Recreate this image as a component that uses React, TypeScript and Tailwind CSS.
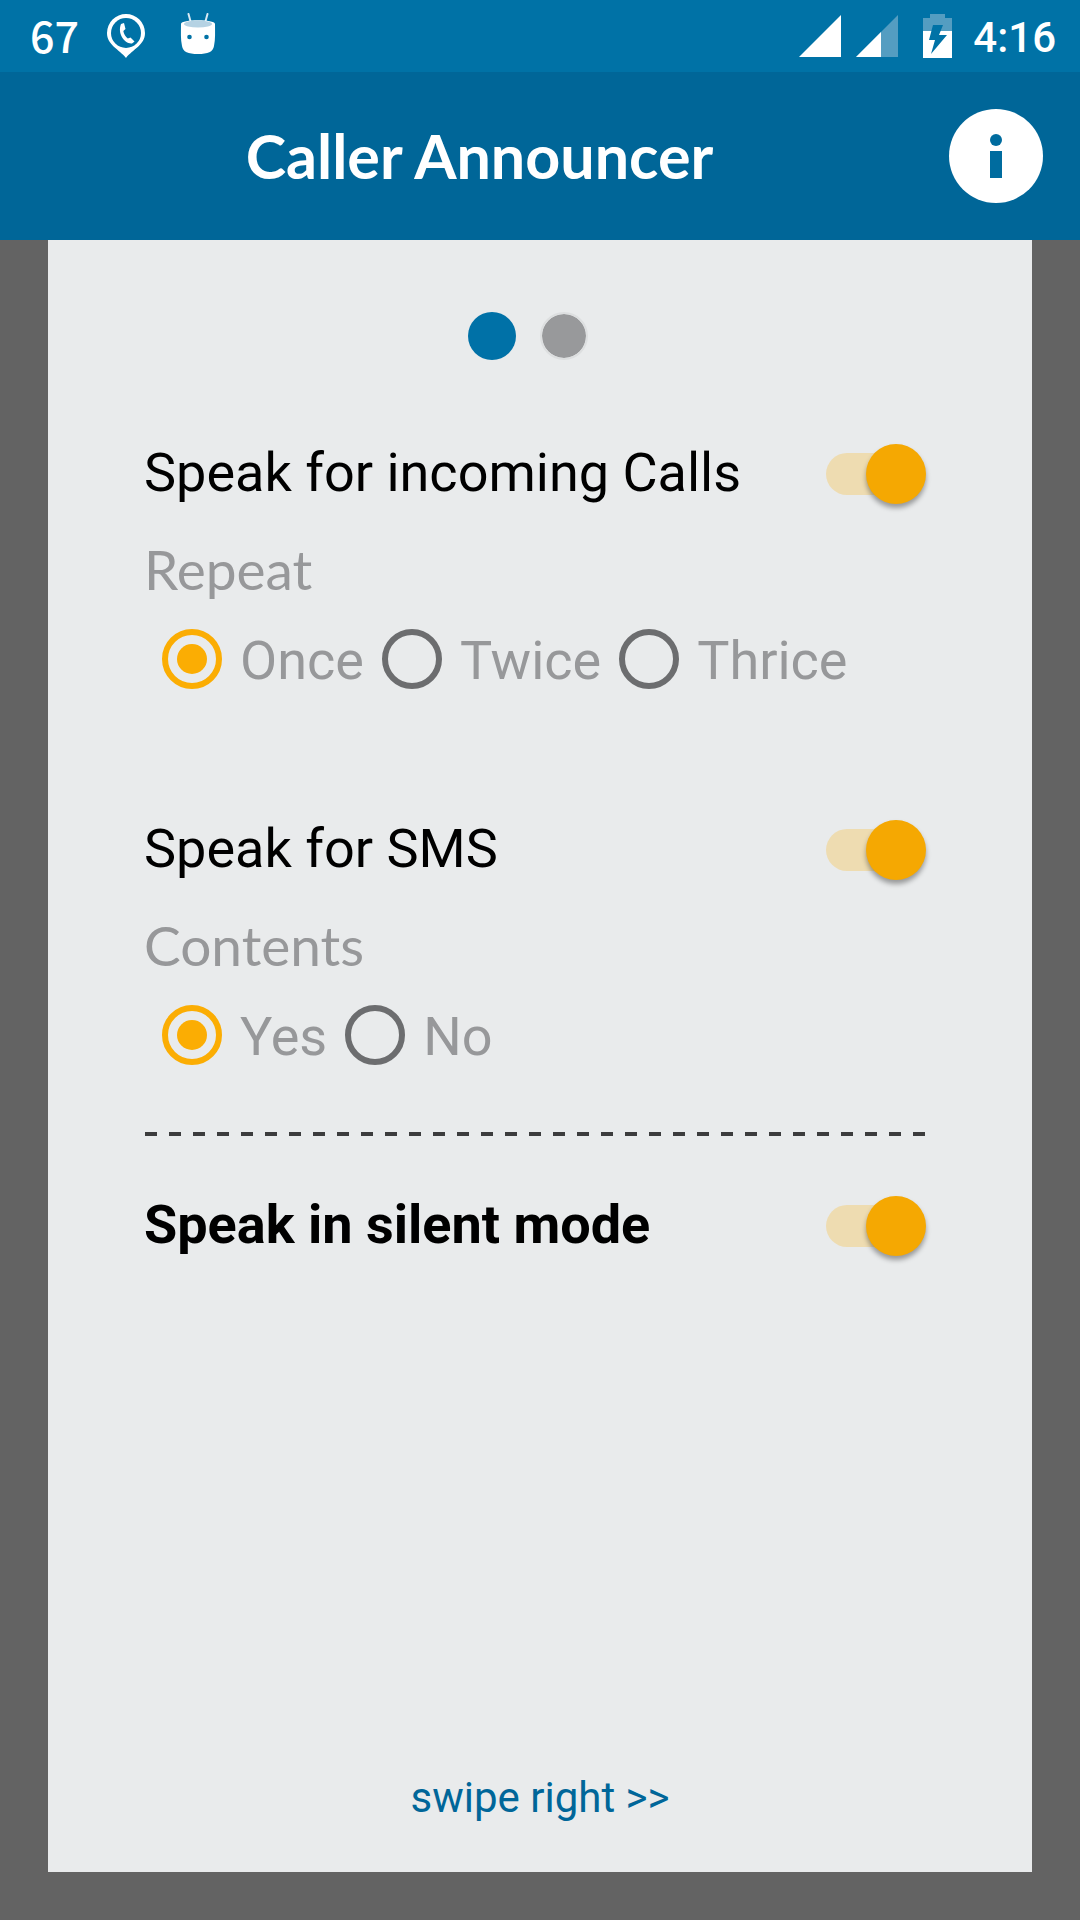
import React, { useState } from 'react';

interface SwitchRowProps {
  id: string;
  label: string;
  bold?: boolean;
}

const SwitchRow: React.FC<SwitchRowProps> = ({ id, label, bold }) => (
  <div className="flex h-[72px] items-center justify-between">
    <label htmlFor={id} className={`pb-[2px] text-[54px] leading-[68px] text-black ${bold ? 'font-bold' : ''}`}>
      {label}
    </label>
    <input
      id={id}
      type="checkbox"
      role="switch"
      defaultChecked
      className="mr-2 flex h-[42px] w-[92px] shrink-0 appearance-none items-center justify-start rounded-full bg-[#c4c6c7] before:-ml-2 before:size-[60px] before:shrink-0 before:rounded-full before:bg-[#f1f1f1] before:shadow-[0_4px_5px_rgba(0,0,0,0.35)] before:content-[''] checked:justify-end checked:bg-[#eedcb1] checked:before:-mr-2 checked:before:ml-0 checked:before:bg-[#f5a802]"
    />
  </div>
);

interface RadioRowProps {
  name: string;
  title: string;
  options: string[];
}

const RadioRow: React.FC<RadioRowProps> = ({ name, title, options }) => {
  const [selected, setSelected] = useState(options[0]);

  return (
    <fieldset className="mt-[23px]">
      <legend className="font-['Lato',sans-serif] text-[55px] leading-[72px]">{title}</legend>
      <div className="mt-5 flex h-[72px] items-center gap-[18px] pl-[18px]">
        {options.map(option => (
          <label key={option} className="flex items-center gap-[18px] text-[54px] leading-[72px]">
            <input
              type="radio"
              name={name}
              value={option}
              checked={selected === option}
              onChange={() => setSelected(option)}
              className="mb-1 size-[60px] shrink-0 appearance-none rounded-full border-6 border-[#6c6d6f] bg-clip-content p-[9px] checked:border-[#fbad03] checked:bg-[#fbad03]"
            />
            {option}
          </label>
        ))}
      </div>
    </fieldset>
  );
};

const StatusBar: React.FC = () => (
  <div className="flex h-[72px] items-center justify-between bg-[#0072a6] pr-6 pl-[30px] text-white">
    <div className="flex items-center">
      <span className="w-[76px] pb-1 font-['Noto_Sans_CJK_SC',sans-serif] text-[43px] leading-[66px] font-medium">67</span>
      <svg className="h-[46px] w-10" viewBox="0 0 40 46" fill="none">
        <path d="M20 1a19 19 0 0 0-19 19c0 12 12 16 19 25 7-9 19-13 19-25A19 19 0 0 0 20 1z" fill="#fff" />
        <circle cx="20" cy="20" r="15" fill="#0072a6" />
        <path d="M15 11l3-1 1.500 6-2.200 2c.6 3 2.200 5.500 4.500 7.500l2.700-.9 4 3.800-2.500 2c-7 1-15-9.500-11-19.400z" fill="#fff" />
      </svg>
      <svg className="ml-[34px] h-[46px] w-9" viewBox="0 0 36 46">
        <path d="M8.500 1l2.500 9M27.500 1l-2.500 9" stroke="#d7e9f3" strokeWidth="2" strokeLinecap="round" />
        <path d="M1 11c0-5 34-5 34 0 0 8 .5 15-1 22-1 6-6 8-16 8s-15-2-16-8C.5 26 1 19 1 11z" fill="#fff" />
        <ellipse cx="18" cy="11" rx="14" ry="3.500" fill="#b5d2e3" />
        <circle cx="9.500" cy="24" r="2.300" fill="#0072a6" />
        <circle cx="26.500" cy="24" r="2.300" fill="#0072a6" />
      </svg>
    </div>
    <div className="flex items-center">
      <svg className="size-[42px]" viewBox="0 0 42 42">
        <path d="M42 0v42H0z" fill="#fff" />
      </svg>
      <svg className="ml-[15px] size-[42px]" viewBox="0 0 42 42">
        <path d="M42 0v42H0z" fill="#549dc1" />
        <path d="M25 17v25H0z" fill="#fff" />
      </svg>
      <svg className="ml-[25px] h-11 w-[29px]" viewBox="0 0 29 44">
        <path d="M7 0h15v4h7v14H0V4h7z" fill="#549dc1" />
        <path d="M0 17h29v27H0z" fill="#fff" />
        <path d="M10 11h10l-4 10h8L8 40l4-14H6z" fill="#0072a6" />
      </svg>
      <span className="ml-[21px] pt-1 text-[42px] leading-[68px] font-medium">4:16</span>
    </div>
  </div>
);

const App: React.FC = () => {
  return (
    <div className="flex min-h-screen flex-col bg-[#636363] font-['Roboto',sans-serif]">
      <StatusBar />

      <header className="flex h-[168px] items-center bg-[#006698] pr-[37px] pl-[10px] text-white">
        <h1 className="flex-1 text-center font-['Lato',sans-serif] text-[61px] leading-[72px] font-bold">
          Caller Announcer
        </h1>
        <button type="button" title="Info" className="size-[94px] rounded-full bg-white">
          <svg className="size-full" viewBox="0 0 94 94" fill="#006c9f">
            <circle cx="47" cy="31" r="6" />
            <path d="M41 42h12v27H41z" />
          </svg>
        </button>
      </header>

      <main className="mx-12 mb-12 flex flex-1 flex-col bg-[#e9ebec] px-24 pt-[72px] pb-[50px] text-[#97989a]">
        {/* Page indicator */}
        <div className="flex justify-center">
          <span className="mr-6 size-12 rounded-full bg-[#0071a7]" />
          <span className="mr-6 size-12 rounded-full border-2 border-[#dddfe0] bg-[#98999b] bg-clip-padding" />
        </div>

        <div className="mt-[78px] pr-[10px]">
          <SwitchRow id="calls" label="Speak for incoming Calls" />
          <RadioRow name="repeat" title="Repeat" options={['Once', 'Twice', 'Thrice']} />
        </div>

        <div className="mt-[117px] pr-[10px]">
          <SwitchRow id="sms" label="Speak for SMS" />
          <RadioRow name="contents" title="Contents" options={['Yes', 'No']} />
        </div>

        <hr className="mt-[59px] mr-[10px] ml-px h-1 border-0 bg-[repeating-linear-gradient(90deg,#3c3c3d_0_12px,transparent_12px_24px)]" />

        <div className="mt-[54px] pr-[10px]">
          <SwitchRow id="silent" label="Speak in silent mode" bold />
        </div>

        <button type="button" className="mt-auto self-center text-[42px] leading-[48px] text-[#006699]">
          swipe right &gt;&gt;
        </button>
      </main>
    </div>
  );
};

export default App;
